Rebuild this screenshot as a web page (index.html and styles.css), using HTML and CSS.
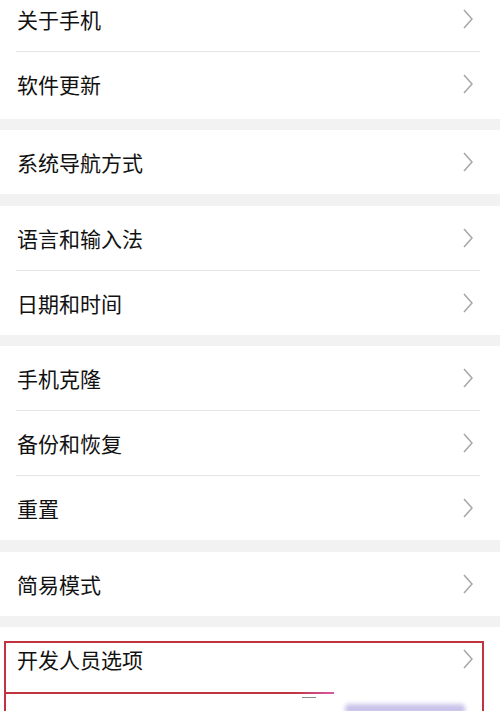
FILE: index.html
```html
<!DOCTYPE html>
<html lang="zh-CN">
<head>
  <meta charset="UTF-8">
  <title>设置</title>
  <link rel="stylesheet" href="styles.css">
</head>
<body>

  <div class="lista">

    <!-- grupo 1 -->
    <div class="grupo">
      <div class="item"><span>关于手机</span><svg class="seta" viewBox="0 0 10 20"><path d="M1 1 L9 10 L1 19"/></svg></div>
      <div class="linha"></div>
      <div class="item"><span>软件更新</span><svg class="seta" viewBox="0 0 10 20"><path d="M1 1 L9 10 L1 19"/></svg></div>
    </div>

    <!-- grupo 2 -->
    <div class="grupo">
      <div class="item"><span>系统导航方式</span><svg class="seta" viewBox="0 0 10 20"><path d="M1 1 L9 10 L1 19"/></svg></div>
    </div>

    <!-- grupo 3 -->
    <div class="grupo">
      <div class="item"><span>语言和输入法</span><svg class="seta" viewBox="0 0 10 20"><path d="M1 1 L9 10 L1 19"/></svg></div>
      <div class="linha"></div>
      <div class="item"><span>日期和时间</span><svg class="seta" viewBox="0 0 10 20"><path d="M1 1 L9 10 L1 19"/></svg></div>
    </div>

    <!-- grupo 4 -->
    <div class="grupo">
      <div class="item"><span>手机克隆</span><svg class="seta" viewBox="0 0 10 20"><path d="M1 1 L9 10 L1 19"/></svg></div>
      <div class="linha"></div>
      <div class="item"><span>备份和恢复</span><svg class="seta" viewBox="0 0 10 20"><path d="M1 1 L9 10 L1 19"/></svg></div>
      <div class="linha"></div>
      <div class="item"><span>重置</span><svg class="seta" viewBox="0 0 10 20"><path d="M1 1 L9 10 L1 19"/></svg></div>
    </div>

    <!-- grupo 5 -->
    <div class="grupo">
      <div class="item"><span>简易模式</span><svg class="seta" viewBox="0 0 10 20"><path d="M1 1 L9 10 L1 19"/></svg></div>
    </div>

    <!-- grupo 6 -->
    <div class="grupo">
      <div class="item"><span>开发人员选项</span><svg class="seta" viewBox="0 0 10 20"><path d="M1 1 L9 10 L1 19"/></svg></div>
    </div>

  </div>

  <!-- marcação vermelha -->
  <div class="marca"></div>
  <div class="traco"></div>
  <div class="mancha"></div>

</body>
</html>
```

FILE: styles.css
```css
body {
  margin: 0;
  font-family: "Noto Sans CJK SC", "Noto Sans", sans-serif;
  background-color: #fff;
  overflow: hidden;
  height: 711px;
  position: relative;
}

.lista {
  display: flex;
  flex-direction: column;
  gap: 11.5px;
  margin-top: -13px;
  background: #f2f2f2;
}

.grupo {
  background: #fff;
  display: flex;
  flex-direction: column;
}

.grupo:first-child {
  padding-bottom: 2.5px;
}

.grupo:last-child {
  padding-bottom: 40px;
}

.item {
  height: 64px;
  display: flex;
  align-items: center;
  justify-content: space-between;
  padding: 0 27px 0 17px;
  font-size: 21px;
  color: #111;
}

.seta {
  width: 10px;
  height: 20px;
  fill: none;
  stroke: #a8a8a8;
  stroke-width: 1.6;
}

.linha {
  height: 1px;
  background: #e6e6e6;
  margin: 0 20px 0 16px;
}

.marca {
  position: absolute;
  left: 4px;
  top: 641px;
  width: 476px;
  height: 90px;
  border: 2px solid #c1343f;
  border-bottom: none;
}

.marca::after {
  content: "";
  position: absolute;
  left: -2px;
  top: 49px;
  width: 330px;
  height: 2px;
  background: linear-gradient(to right, #c1343f 88%, #d85aa8);
}

.traco {
  position: absolute;
  left: 302px;
  top: 697px;
  width: 14px;
  height: 1px;
  background: #888;
}

.mancha {
  position: absolute;
  left: 345px;
  top: 704px;
  width: 120px;
  height: 10px;
  background: #c9c3ea;
  filter: blur(2px);
  border-radius: 4px;
}
```
